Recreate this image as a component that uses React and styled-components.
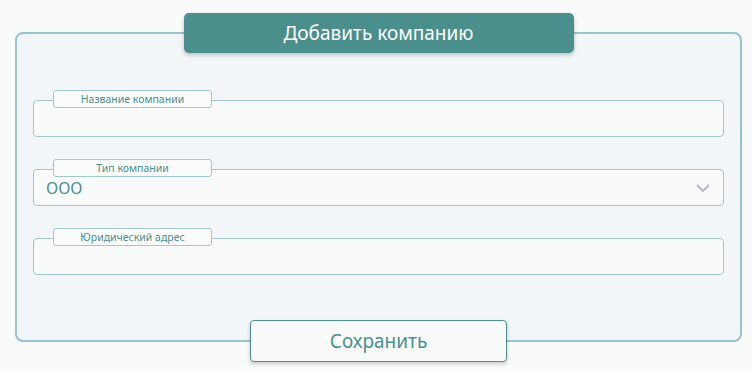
import React from "react";
import styled, { createGlobalStyle } from "styled-components";

const GlobalStyle = createGlobalStyle`
  html, body {
    margin: 0;
    padding: 0;
    background: #f9fbfb;
    font-family: "Noto Sans", "Open Sans", sans-serif;
  }
`;

const Page = styled.div`
  min-height: 100vh;
  box-sizing: border-box;
  padding: 32px 10px 30px 15px;
`;

const Card = styled.form`
  display: flex;
  flex-direction: column;
  background: #f2f6f8;
  border: 2px solid #9bc3cc;
  border-radius: 8px;
  padding: 0 16px;
`;

const Title = styled.div`
  align-self: center;
  width: 390px;
  height: 40px;
  margin-top: -21px;
  margin-bottom: 37px;
  display: flex;
  align-items: center;
  justify-content: center;
  background: #4b8f8c;
  color: #ffffff;
  font-size: 19px;
  border-radius: 5px;
  box-shadow: 0 2px 4px rgba(0, 0, 0, 0.22);
`;

const Fields = styled.div`
  display: flex;
  flex-direction: column;
  gap: 22px;
`;

const Field = styled.div`
  display: flex;
  flex-direction: column;
`;

const Label = styled.label`
  position: relative;
  z-index: 1;
  align-self: flex-start;
  width: 159px;
  height: 18px;
  box-sizing: border-box;
  margin-left: 20px;
  margin-bottom: -8px;
  display: flex;
  align-items: center;
  justify-content: center;
  background: #fafcfc;
  border: 1px solid #a2c8ce;
  border-radius: 3px;
  color: #4b8f8c;
  font-size: 10.5px;
  line-height: 1;
`;

const Box = styled.div`
  height: 37px;
  box-sizing: border-box;
  display: flex;
  align-items: center;
  padding: 0 12px;
  background: #f9fbfb;
  border: 1px solid #a2c8ce;
  border-radius: 4px;
`;

const Input = styled.input`
  flex: 1;
  border: none;
  outline: none;
  background: transparent;
  font: inherit;
  font-size: 16px;
  color: #4b8f8c;
`;

const Value = styled.span`
  flex: 1;
  font-size: 16px;
  color: #4b8f8c;
  padding-top: 1px;
`;

const Save = styled.button`
  align-self: center;
  width: 257px;
  height: 42px;
  margin-top: 45px;
  margin-bottom: -22px;
  background: #f9fbfb;
  border: 1px solid #4b8f8c;
  border-radius: 4px;
  color: #4b8f8c;
  font-family: inherit;
  font-size: 19px;
  box-shadow: 0 2px 4px rgba(0, 0, 0, 0.2);
`;

const Chevron = () => (
  <svg width="16" height="10" viewBox="0 0 16 10">
    <path d="M2 2 L8 8 L14 2" fill="none" stroke="#b3bac6" strokeWidth="2" />
  </svg>
);

export default function App() {
  return (
    <>
      <GlobalStyle />
      <Page>
        <Card onSubmit={(e) => e.preventDefault()}>
          <Title>Добавить компанию</Title>
          <Fields>
            <Field>
              <Label>Название компании</Label>
              <Box>
                <Input />
              </Box>
            </Field>
            <Field>
              <Label>Тип компании</Label>
              <Box>
                <Value>ООО</Value>
                <Chevron />
              </Box>
            </Field>
            <Field>
              <Label>Юридический адрес</Label>
              <Box>
                <Input />
              </Box>
            </Field>
          </Fields>
          <Save type="submit">Сохранить</Save>
        </Card>
      </Page>
    </>
  );
}
